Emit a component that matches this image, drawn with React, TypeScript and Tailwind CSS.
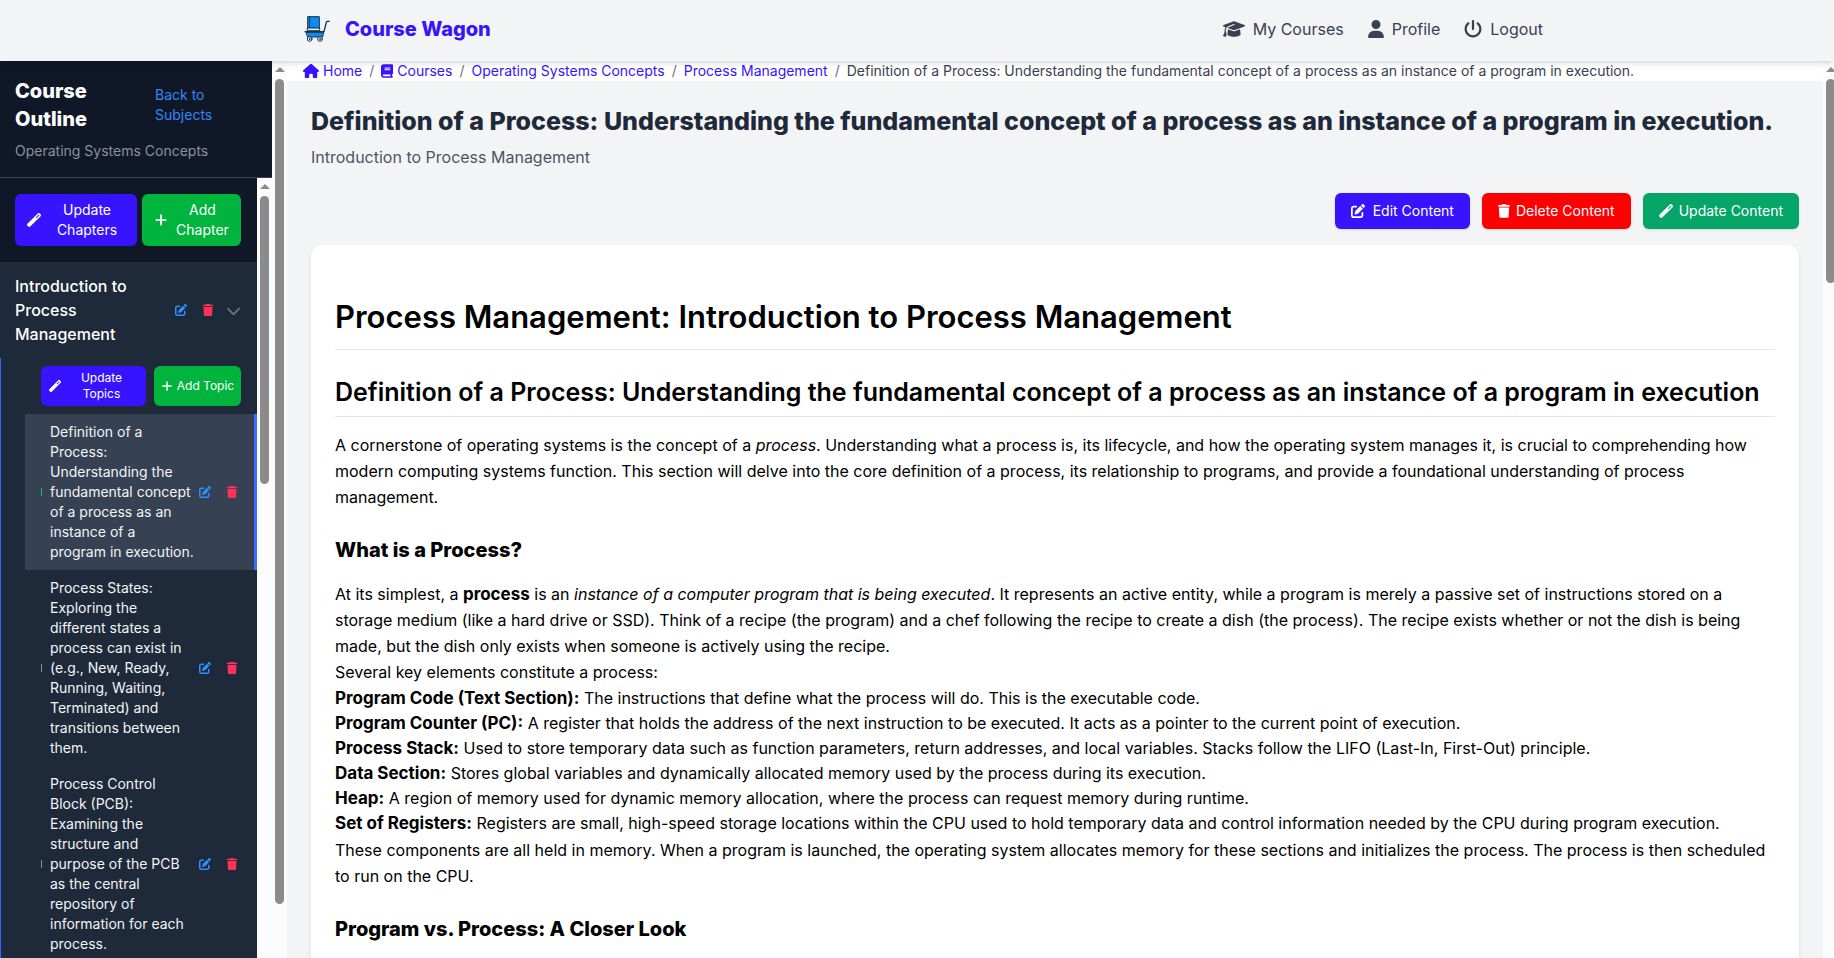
import type { ReactNode } from "react";
import {
  FaBook,
  FaChevronDown,
  FaGraduationCap,
  FaHouse,
  FaPenToSquare,
  FaPlus,
  FaPowerOff,
  FaTrash,
  FaUser,
  FaWandMagic,
} from "react-icons/fa6";

const topics = [
  {
    title:
      "Definition of a Process: Understanding the fundamental concept of a process as an instance of a program in execution.",
    active: true,
  },
  {
    title:
      "Process States: Exploring the different states a process can exist in (e.g., New, Ready, Running, Waiting, Terminated) and transitions between them.",
    active: false,
  },
  {
    title:
      "Process Control Block (PCB): Examining the structure and purpose of the PCB as the central repository of information for each process.",
    active: false,
  },
];

const elements = [
  ["Program Code (Text Section):", "The instructions that define what the process will do. This is the executable code."],
  ["Program Counter (PC):", "A register that holds the address of the next instruction to be executed. It acts as a pointer to the current point of execution."],
  ["Process Stack:", "Used to store temporary data such as function parameters, return addresses, and local variables. Stacks follow the LIFO (Last-In, First-Out) principle."],
  ["Data Section:", "Stores global variables and dynamically allocated memory used by the process during its execution."],
  ["Heap:", "A region of memory used for dynamic memory allocation, where the process can request memory during runtime."],
  ["Set of Registers:", "Registers are small, high-speed storage locations within the CPU used to hold temporary data and control information needed by the CPU during program execution."],
];

function Logo() {
  return (
    <svg viewBox="3 9 96 96" className="size-8" aria-hidden="true">
      <g stroke="#17354d" strokeWidth="3" strokeLinejoin="round" strokeLinecap="round">
        <path d="M24 20h34v35H24z" fill="#0d8bf0" />
        <path d="M29 20v30" fill="none" />
        <path d="M23 54h36v8H23z" fill="#e8eef3" />
        <path d="M19 67h52l-3 14H24z" fill="#0d8bf0" />
        <path d="M15 65h57l7-28q1-3 4-3h5" fill="none" strokeWidth="4" />
        <circle cx="29" cy="87" r="7" fill="#e8eef3" />
        <circle cx="60" cy="87" r="7" fill="#e8eef3" />
        <circle cx="29" cy="87" r="1" />
        <circle cx="60" cy="87" r="1" />
      </g>
    </svg>
  );
}

function Scrollbar({ thumb }: { thumb: string }) {
  return (
    <div aria-hidden="true" className="flex w-[15px] shrink-0 flex-col items-center bg-[#fcfcfc] pt-1.5">
      <svg viewBox="0 0 10 5" className="mb-[7px] h-[5px] w-[10px]">
        <path d="M5 0l5 5H0z" fill="#8b8b8b" />
      </svg>
      <div className={`w-[9px] shrink-0 rounded-full bg-[#8b8b8b] ${thumb}`} />
    </div>
  );
}

function RowActions() {
  return (
    <div className="flex shrink-0 gap-[7px] text-xs">
      <button type="button" aria-label="Edit" className="p-1 text-[#2f8fff]">
        <FaPenToSquare />
      </button>
      <button type="button" aria-label="Delete" className="p-1 text-[#ff3158]">
        <FaTrash />
      </button>
    </div>
  );
}

function Sidebar() {
  return (
    <aside className="flex w-[287px] shrink-0">
      <div className="flex min-w-0 flex-1 flex-col bg-gray-900 text-white">
        <div className="border-b border-gray-700 py-4 pr-4 pl-[15px]">
          <div className="flex items-center justify-between">
            <h2 className="w-[100px] text-xl font-extrabold">Course Outline</h2>
            <a href="#subjects" className="w-[101px] text-sm text-[#3487f7]">
              Back to<br />Subjects
            </a>
          </div>
          <p className="mt-2 text-sm text-[#8b919d]">Operating Systems Concepts</p>
        </div>
        <div className="flex min-h-0 flex-1">
          <div className="min-w-0 flex-1 overflow-y-auto [scrollbar-width:none]">
            <div className="flex gap-[5px] py-4 pr-4 pl-[15px] text-sm">
              <button type="button" className="flex flex-1 items-center gap-2 rounded-md bg-[#3713ff] px-3 py-1.5">
                <FaWandMagic className="shrink-0" />
                <span className="flex-1">Update Chapters</span>
              </button>
              <button type="button" className="flex w-[99px] items-center gap-2 rounded-md bg-[#00b43d] px-3 py-1.5">
                <FaPlus className="shrink-0" />
                <span className="flex-1">Add Chapter</span>
              </button>
            </div>
            <section className="bg-gray-800">
              <div className="flex items-center gap-2 py-3 pr-4 pl-[15px]">
                <h3 className="flex-1 pr-6 font-medium">Introduction to Process Management</h3>
                <RowActions />
                <button type="button" aria-label="Collapse chapter" className="text-gray-500">
                  <FaChevronDown size={15} />
                </button>
              </div>
              <div className="border-l border-[#2f66ff] pl-6">
                <div className="flex gap-2 py-2 pr-4 pl-4 text-xs">
                  <button type="button" className="flex flex-1 items-center gap-1 rounded-md bg-[#3713ff] px-2 py-1">
                    <FaWandMagic className="shrink-0" />
                    <span className="flex-1">Update<br />Topics</span>
                  </button>
                  <button type="button" className="flex w-[87px] items-center justify-center gap-1 rounded-md bg-[#00b43d] whitespace-nowrap">
                    <FaPlus />
                    Add Topic
                  </button>
                </div>
                <ul>
                  {topics.map((t) => (
                    <li
                      key={t.title}
                      className={`flex items-center border-r-3 py-2 pr-3 pl-4 text-sm ${
                        t.active ? "border-[#3b6cff] bg-gray-700" : "border-transparent"
                      }`}
                    >
                      <span className={`mr-2 h-2 w-px shrink-0 ${t.active ? "bg-[#00c950]" : "bg-[#8b919d]"}`} />
                      <a href="#topic" className="flex-1 text-[#f3f4f6]">{t.title}</a>
                      <RowActions />
                    </li>
                  ))}
                </ul>
              </div>
            </section>
          </div>
          <Scrollbar thumb="h-[288px]" />
        </div>
      </div>
      <Scrollbar thumb="h-[825px]" />
    </aside>
  );
}

function Crumb({ children, icon }: { children: ReactNode; icon?: ReactNode }) {
  return (
    <li className="flex items-center">
      <a href="#crumb" className="flex items-center gap-1 text-[#3713ff]">
        {icon}
        {children}
      </a>
      <span className="mx-[7px] text-gray-500">/</span>
    </li>
  );
}

export default function App() {
  return (
    <div className="flex h-screen flex-col overflow-hidden bg-[#f3f4f6] font-[Inter,sans-serif]">
      <header className="relative z-10 h-[61px] shrink-0 bg-[#f3f4f6] shadow-md">
        <div className="mx-auto flex h-full max-w-7xl items-center justify-between pr-3.5 pb-1 pl-6">
          <a href="#home" className="flex items-center gap-3 text-xl font-extrabold text-[#3713ff]">
            <Logo />
            Course Wagon
          </a>
          <nav className="flex gap-6 text-[#364153]">
            <a href="#courses" className="flex items-center gap-2">
              <FaGraduationCap size={22} />
              My Courses
            </a>
            <a href="#profile" className="flex items-center gap-2">
              <FaUser className="h-[18px] w-4" />
              Profile
            </a>
            <a href="#logout" className="flex items-center gap-2">
              <FaPowerOff size={18} />
              Logout
            </a>
          </nav>
        </div>
      </header>

      <div className="flex min-h-0 flex-1">
        <Sidebar />
        <main className="min-w-0 flex-1 overflow-y-auto [scrollbar-width:none]">
          <nav aria-label="Breadcrumb" className="bg-white px-4">
            <ol className="flex text-sm">
              <Crumb icon={<FaHouse size={16} />}>Home</Crumb>
              <Crumb icon={<FaBook className="w-3" />}>Courses</Crumb>
              <Crumb>Operating Systems Concepts</Crumb>
              <Crumb>Process Management</Crumb>
              <li className="text-[#364153]">
                Definition of a Process: Understanding the fundamental concept of a process as an instance of a program
                in execution.
              </li>
            </ol>
          </nav>

          <div className="p-6">
            <h1 className="text-[25px] leading-8 font-extrabold text-gray-800">
              Definition of a Process: Understanding the fundamental concept of a process as an instance of a program in
              execution.
            </h1>
            <p className="mt-2 text-gray-600">Introduction to Process Management</p>

            <div className="mt-6 flex justify-end gap-3 text-sm text-white">
              <button type="button" className="flex items-center gap-2 rounded-md bg-[#3713ff] px-4 py-2 shadow-sm">
                <FaPenToSquare />
                Edit Content
              </button>
              <button type="button" className="flex items-center gap-1.5 rounded-md bg-[#ff0000] px-4 py-2 shadow-sm">
                <FaTrash className="w-3" />
                Delete Content
              </button>
              <button type="button" className="flex items-center gap-1.5 rounded-md bg-[#04a566] px-4 py-2 shadow-sm">
                <FaWandMagic />
                Update Content
              </button>
            </div>

            <article className="mt-4 rounded-xl bg-white px-6 pt-[54px] pb-12 leading-[26px] text-black shadow-md [&_strong]:text-[17px]">
              <h1 className="border-b border-[#e5e5e5] pb-3.5 text-[31px] leading-9 font-semibold">
                Process Management: Introduction to Process Management
              </h1>
              <h2 className="mt-[26px] border-b border-[#e5e5e5] pb-2 text-[25px] leading-8 font-semibold">
                Definition of a Process: Understanding the fundamental concept of a process as an instance of a program
                in execution
              </h2>
              <p className="mt-[15px]">
                A cornerstone of operating systems is the concept of a <em>process</em>. Understanding what a process
                is, its lifecycle, and how the operating system manages it, is crucial to comprehending how modern
                computing systems function. This section will delve into the core definition of a process, its
                relationship to programs, and provide a foundational understanding of process management.
              </p>
              <h3 className="mt-[26px] text-xl leading-7 font-extrabold">What is a Process?</h3>
              <p className="mt-[17px]">
                At its simplest, a <strong>process</strong> is an{" "}
                <em>instance of a computer program that is being executed</em>. It represents an active entity, while a
                program is merely a passive set of instructions stored on a storage medium (like a hard drive or SSD).
                Think of a recipe (the program) and a chef following the recipe to create a dish (the process). The
                recipe exists whether or not the dish is being made, but the dish only exists when someone is actively
                using the recipe.
              </p>
              <p>Several key elements constitute a process:</p>
              <ul className="py-px leading-[25px]">
                {elements.map(([term, text]) => (
                  <li key={term}>
                    <strong>{term}</strong> {text}
                  </li>
                ))}
              </ul>
              <p>
                These components are all held in memory. When a program is launched, the operating system allocates
                memory for these sections and initializes the process. The process is then scheduled to run on the CPU.
              </p>
              <h3 className="mt-[26px] text-xl leading-7 font-extrabold">Program vs. Process: A Closer Look</h3>
            </article>
          </div>
        </main>
        <div className="-mr-1 flex">
          <Scrollbar thumb="h-[204px]" />
        </div>
      </div>
    </div>
  );
}
